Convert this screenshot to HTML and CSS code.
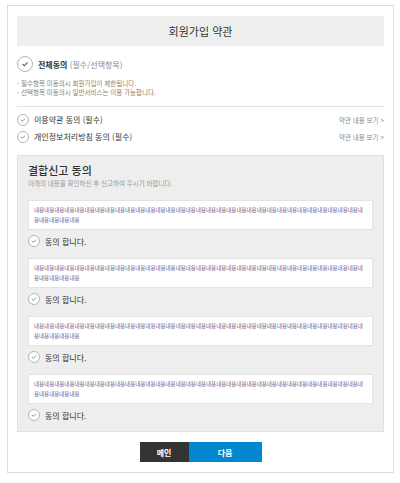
FILE: index.html
```html
<!DOCTYPE html>
<html lang="ko">
<head>
<meta charset="utf-8">
<link rel="stylesheet" href="styles.css">
</head>
<body>
<div class="wrap">
  <div class="title">회원가입 약관</div>

  <div class="all">
    <span class="chk big"><svg viewBox="0 0 16 16"><path d="M5.5 8.3 L7.3 10 L10.6 6.4"/></svg></span>
    <span class="all-label"><b>전체동의</b> <span class="muted">(필수/선택항목)</span></span>
  </div>

  <div class="notes">
    <p>- 필수항목 미동의시 회원가입이 제한됩니다.</p>
    <p>- 선택항목 미동의시 일반서비스는 이용 가능합니다.</p>
  </div>

  <div class="rows">
    <div class="row">
      <span class="chk"><svg viewBox="0 0 16 16"><path d="M5 8.3 L7 10.2 L10.8 6.2"/></svg></span>
      <span class="row-label">이용약관 동의 (필수)</span>
      <span class="more">약관 내용 보기 &gt;</span>
    </div>
    <div class="row">
      <span class="chk"><svg viewBox="0 0 16 16"><path d="M5 8.3 L7 10.2 L10.8 6.2"/></svg></span>
      <span class="row-label">개인정보처리방침 동의 (필수)</span>
      <span class="more">약관 내용 보기 &gt;</span>
    </div>
  </div>

  <div class="section">
    <h2>결합신고 동의</h2>
    <p class="sub">아래의 내용을 확인하신 후 신고하여 주시기 바랍니다.</p>

    <div class="item">
      <div class="box">내용내용내용내용내용내용내용내용내용내용내용내용내용내용내용내용내용내용내용내용내용내용내용내용내용내용내용내용내용내용내용내용내용내용내용내용내용</div>
      <div class="agree"><span class="chk"><svg viewBox="0 0 16 16"><path d="M5 8.3 L7 10.2 L10.8 6.2"/></svg></span>동의 합니다.</div>
    </div>
    <div class="item">
      <div class="box">내용내용내용내용내용내용내용내용내용내용내용내용내용내용내용내용내용내용내용내용내용내용내용내용내용내용내용내용내용내용내용내용내용내용내용내용내용</div>
      <div class="agree"><span class="chk"><svg viewBox="0 0 16 16"><path d="M5 8.3 L7 10.2 L10.8 6.2"/></svg></span>동의 합니다.</div>
    </div>
    <div class="item">
      <div class="box">내용내용내용내용내용내용내용내용내용내용내용내용내용내용내용내용내용내용내용내용내용내용내용내용내용내용내용내용내용내용내용내용내용내용내용내용내용</div>
      <div class="agree"><span class="chk"><svg viewBox="0 0 16 16"><path d="M5 8.3 L7 10.2 L10.8 6.2"/></svg></span>동의 합니다.</div>
    </div>
    <div class="item">
      <div class="box">내용내용내용내용내용내용내용내용내용내용내용내용내용내용내용내용내용내용내용내용내용내용내용내용내용내용내용내용내용내용내용내용내용내용내용내용내용</div>
      <div class="agree"><span class="chk"><svg viewBox="0 0 16 16"><path d="M5 8.3 L7 10.2 L10.8 6.2"/></svg></span>동의 합니다.</div>
    </div>
  </div>

  <div class="buttons">
    <button class="btn dark">메인</button>
    <button class="btn blue">다음</button>
  </div>
</div>
</body>
</html>
```

FILE: styles.css
```css
* { box-sizing: border-box; }
html, body { margin: 0; padding: 0; background: #fff; }
body {
  font-family: "Noto Sans CJK KR", "Noto Sans", sans-serif;
  color: #333;
}
p { margin: 0; }

.wrap {
  width: 387px;
  height: 468px;
  margin: 5px 0 0 7px;
  border: 1px solid #dcdcdc;
  padding: 10px 9px 0 9px;
}

.title {
  height: 30px;
  background: #eeeeee;
  font-size: 11px;
  line-height: 30px;
  text-align: center;
  color: #333;
}

.chk {
  display: inline-flex;
  width: 12px;
  height: 12px;
  border: 1px solid #b5b5b5;
  border-radius: 50%;
  background: #fff;
  flex: none;
}
.chk svg { width: 100%; height: 100%; }
.chk path { fill: none; stroke: #777; stroke-width: 1.3; stroke-linecap: round; stroke-linejoin: round; }
.chk.big { width: 16px; height: 16px; }
.chk.big path { stroke: #555; stroke-width: 1.2; }

.all {
  display: flex;
  align-items: center;
  gap: 5px;
  margin-top: 10px;
  height: 16px;
}
.all-label { font-size: 8px; color: #333; }
.all-label b { font-weight: 700; }
.muted { color: #888; }

.notes {
  margin-top: 7px;
  font-size: 6.5px;
  line-height: 9px;
  color: #8a7f70;
}

.rows {
  margin-top: 9px;
  border-top: 1px solid #e2e2e2;
  padding-top: 4px;
}
.row {
  display: flex;
  align-items: center;
  gap: 5px;
  height: 17px;
  font-size: 8px;
}
.row-label { flex: 1; color: #333; }
.more { font-size: 6.5px; color: #888; }

.section {
  margin-top: 10px;
  background: #eeeeee;
  border: 1px solid #e0e0e0;
  padding: 7px 10px 10px 10px;
}
.section h2 {
  margin: 0;
  font-size: 11px;
  font-weight: 500;
  line-height: 14px;
  color: #333;
}
.sub {
  font-size: 6.5px;
  color: #999;
  line-height: 9px;
  margin-top: 2px;
  margin-bottom: 12px;
}

.item + .item { margin-top: 11px; }
.box {
  background: #fff;
  border: 1px solid #e3e3e3;
  padding: 4px 7px 4px 5px;
  font-size: 5.5px;
  line-height: 10px;
  color: #6b5a8a;
  word-break: break-all;
  height: 30px;
}
.agree {
  display: flex;
  align-items: center;
  gap: 5px;
  margin-top: 5px;
  height: 12px;
  font-size: 8px;
  color: #333;
}

.buttons {
  display: flex;
  justify-content: center;
  margin-top: 10px;
}
.btn {
  border: none;
  height: 20px;
  font-family: inherit;
  font-size: 8px;
  font-weight: 700;
  color: #fff;
  padding: 0;
}
.btn.dark { width: 49px; background: #333; }
.btn.blue { width: 73px; background: #0087cf; }
```
